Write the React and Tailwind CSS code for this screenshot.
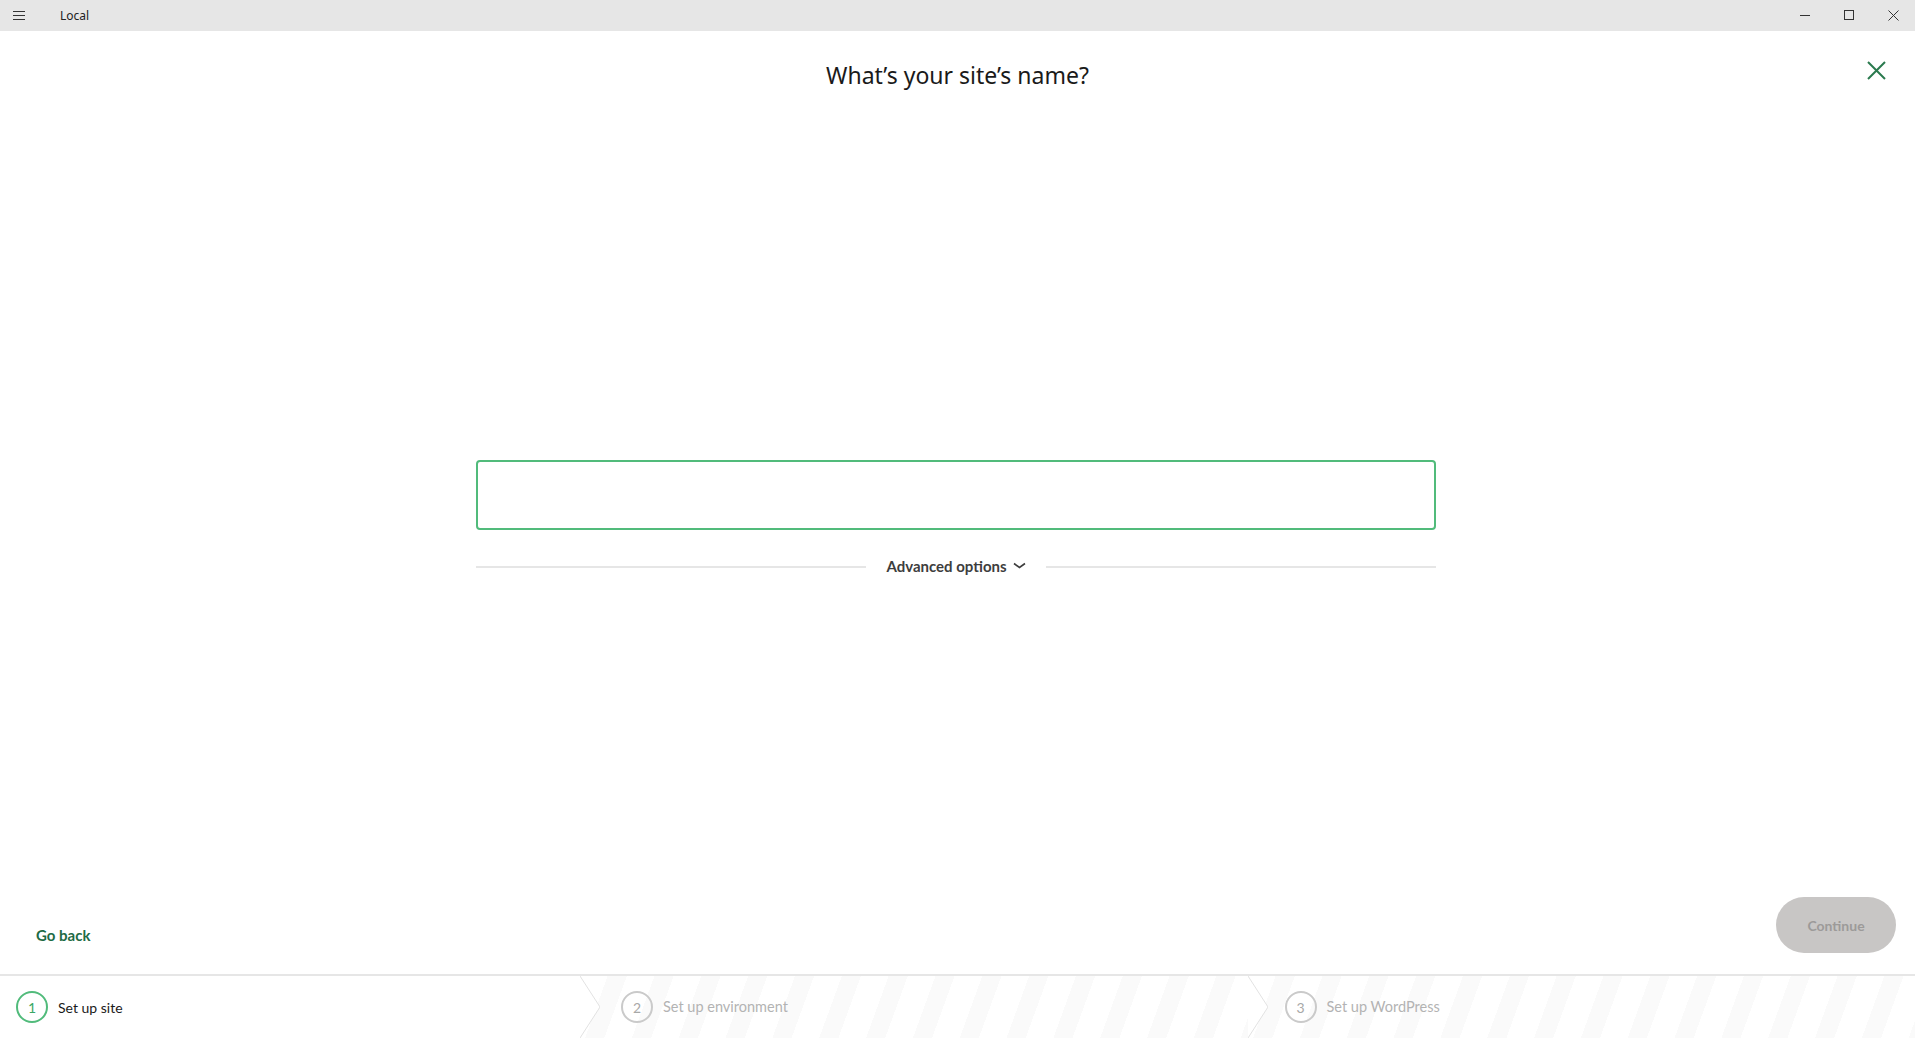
import React from "react";

const stripes =
  "bg-[repeating-linear-gradient(110deg,#ffffff_0px,#ffffff_26px,#fafafa_26px,#fafafa_44px)]";

function Chevron() {
  return (
    <svg width="20" height="62" viewBox="0 0 20 62" className="shrink-0 block">
      <polygon points="0,0 20,31 0,62" fill="#ffffff" />
      <polyline points="0,0 20,31 0,62" fill="none" stroke="#e2e2e2" strokeWidth="1" />
    </svg>
  );
}

export default function App() {
  return (
    <div className="w-[1915px] h-[1038px] flex flex-col bg-white overflow-hidden font-['Lato','Noto_Sans',sans-serif]">
      {/* Title bar */}
      <div className="h-[31px] shrink-0 bg-[#e6e6e6] flex items-center">
        <div className="w-[36px] flex items-center justify-center">
          <svg width="14" height="10" viewBox="0 0 14 10" className="ml-[1px]">
            <path d="M1 0.5H13M1 4.5H13M1 8.5H13" stroke="#333" strokeWidth="1" />
          </svg>
        </div>
        <span className="ml-[24px] text-[12px] text-[#222] font-['Noto_Sans',sans-serif] leading-none">
          Local
        </span>
        <div className="flex-1" />
        <div className="flex h-full">
          <div className="w-[44px] h-full flex items-center justify-center">
            <svg width="11" height="11" viewBox="0 0 11 11">
              <path d="M0 5.5H10" stroke="#333" strokeWidth="1" />
            </svg>
          </div>
          <div className="w-[44px] h-full flex items-center justify-center">
            <svg width="11" height="11" viewBox="0 0 11 11">
              <rect x="0.5" y="0.5" width="9" height="9" fill="none" stroke="#333" strokeWidth="1" />
            </svg>
          </div>
          <div className="w-[44px] h-full flex items-center justify-center">
            <svg width="11" height="11" viewBox="0 0 11 11">
              <path d="M0.5 0.5L10.5 10.5M10.5 0.5L0.5 10.5" stroke="#333" strokeWidth="1" />
            </svg>
          </div>
        </div>
      </div>

      {/* Main */}
      <div className="flex-1 relative flex flex-col">
        <button className="absolute top-[29px] right-[29px] w-[20px] h-[20px] flex items-center justify-center">
          <svg width="19" height="19" viewBox="0 0 19 19">
            <path d="M1 1L18 18M18 1L1 18" stroke="#2a7a4e" strokeWidth="2" />
          </svg>
        </button>

        <h1 className="pt-[28px] text-center text-[23px] leading-[32px] text-[#1a1a1a] font-['Noto_Sans',sans-serif]">
          What’s your site’s name?
        </h1>

        <div className="mt-[369px] w-[960px] ml-[476px]">
          <div className="h-[70px] border-2 border-[#51bb7b] rounded-[4px] bg-white" />
          <div className="mt-[26px] flex items-center h-[20px]">
            <div className="flex-1 h-[2px] bg-[#e6e6e6] mt-[1px]" />
            <div className="px-[20px] flex items-center gap-[6px] text-[15px] font-bold text-[#3d3d3d]">
              <span>Advanced options</span>
              <svg width="13" height="8" viewBox="0 0 13 8">
                <path d="M1 1.5L6.5 5.5L12 1.5" fill="none" stroke="#3d3d3d" strokeWidth="1.6" />
              </svg>
            </div>
            <div className="flex-1 h-[2px] bg-[#e6e6e6] mt-[1px]" />
          </div>
        </div>

        <div className="flex-1" />

        <div className="flex items-center justify-between pl-[36px] pr-[19px] pb-[21px]">
          <span className="pt-[20px] text-[15px] font-bold text-[#1e6b45]">Go back</span>
          <button className="w-[120px] h-[56px] rounded-full bg-[#c8c6c5] text-[14px] font-bold text-[#9c9a99]">
            Continue
          </button>
        </div>
      </div>

      {/* Footer steps */}
      <div className="h-[64px] shrink-0 border-t-2 border-[#e6e6e6] flex">
        <div className="w-[580px] shrink-0 flex items-center pl-[16px] bg-white">
          <div className="w-[32px] h-[32px] rounded-full border-2 border-[#51bb7b] flex items-center justify-center text-[14px] text-[#3aa865]">
            1
          </div>
          <span className="ml-[10px] text-[14px] text-[#1a1a1a]">Set up site</span>
        </div>
        <div className={`flex-1 flex items-center ${stripes}`}>
          <Chevron />
          <div className="ml-[21px] w-[32px] h-[32px] rounded-full border-2 border-[#cacaca] flex items-center justify-center text-[14px] text-[#a8a8a8]">
            2
          </div>
          <span className="ml-[10px] text-[14.5px] text-[#b3b3b3]">Set up environment</span>
        </div>
        <div className={`flex-1 flex items-center ${stripes}`}>
          <Chevron />
          <div className="ml-[17px] w-[32px] h-[32px] rounded-full border-2 border-[#cacaca] flex items-center justify-center text-[14px] text-[#a8a8a8]">
            3
          </div>
          <span className="ml-[10px] text-[14.5px] text-[#b3b3b3]">Set up WordPress</span>
        </div>
      </div>
    </div>
  );
}
